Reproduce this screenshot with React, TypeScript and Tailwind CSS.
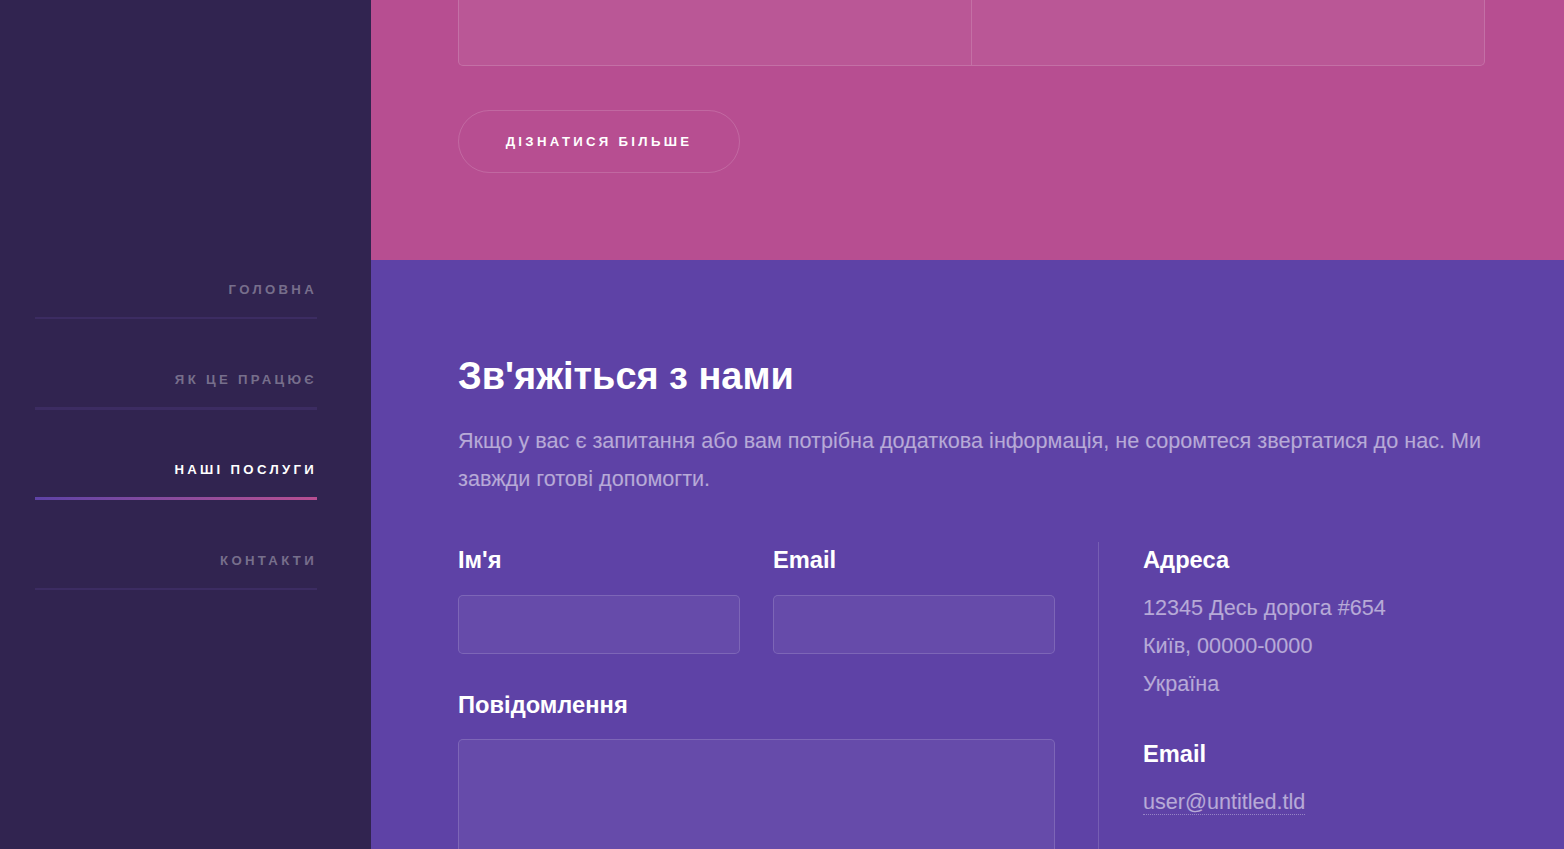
import React from "react";

const navItems = [
  { label: "Головна", active: false },
  { label: "Як це працює", active: false },
  { label: "Наші послуги", active: true },
  { label: "Контакти", active: false },
];

export default function App() {
  return (
    <div
      className="flex h-[849px] w-full overflow-hidden"
      style={{ fontFamily: '"Liberation Sans", Arial, Helvetica, sans-serif' }}
    >
      {/* Sidebar */}
      <aside className="w-[371px] shrink-0 bg-[#312450] pt-[229px] pl-[35px]">
        <nav className="w-[282px]">
          {navItems.map((item) => (
            <a
              key={item.label}
              href="#"
              className="block pt-[50.7px] text-right"
            >
              <span
                className={`block pb-[17px] text-[13.2px] font-bold uppercase leading-[20px] tracking-[0.25em] ${
                  item.active ? "text-white" : "text-white/35"
                }`}
              >
                {item.label}
              </span>
              <span
                className={`block h-[2.6px] w-full ${
                  item.active
                    ? "bg-gradient-to-r from-[#5e42a6] to-[#b74e91]"
                    : "bg-[#3c2c62]"
                }`}
              />
            </a>
          ))}
        </nav>
      </aside>

      {/* Main */}
      <main className="flex min-w-0 flex-1 flex-col">
        {/* Pink section */}
        <section className="h-[260px] shrink-0 bg-[#b74e91] pl-[87px] pr-[79px]">
          <div className="flex h-[66px] rounded-b-[5px] border border-t-0 border-white/15 bg-white/5">
            <div className="flex-1" />
            <div className="flex-1 border-l border-white/15" />
          </div>
          <div className="mt-[44px]">
            <a
              href="#"
              className="inline-flex h-[63px] w-[282px] items-center justify-center rounded-full border border-white/15 text-[13.2px] font-bold uppercase tracking-[0.25em] text-white"
            >
              Дізнатися більше
            </a>
          </div>
        </section>

        {/* Purple section */}
        <section className="flex-1 bg-[#5e42a6] pl-[87px] pr-[79px] pt-[88px] text-[21.6px] leading-[38px] text-white/55">
          <h2 className="mb-[18px] text-[37.9px] font-bold leading-[56px] text-white">
            Зв'яжіться з нами
          </h2>
          <p className="mb-[44px]">
            Якщо у вас є запитання або вам потрібна додаткова інформація, не
            соромтеся звертатися до нас. Ми завжди готові допомогти.
          </p>

          <div className="flex">
            <form className="w-[597px] shrink-0">
              <div className="flex gap-[33px]">
                <div className="w-[282px]">
                  <label className="mb-[17px] block text-[23.7px] font-bold leading-[36px] text-white">
                    Ім'я
                  </label>
                  <input
                    type="text"
                    className="block h-[59px] w-full rounded-[5px] border border-white/15 bg-white/5 outline-none"
                  />
                </div>
                <div className="w-[282px]">
                  <label className="mb-[17px] block text-[23.7px] font-bold leading-[36px] text-white">
                    Email
                  </label>
                  <input
                    type="email"
                    className="block h-[59px] w-full rounded-[5px] border border-white/15 bg-white/5 outline-none"
                  />
                </div>
              </div>
              <div className="mt-[33px]">
                <label className="mb-[16px] block text-[23.7px] font-bold leading-[36px] text-white">
                  Повідомлення
                </label>
                <textarea className="block h-[200px] w-full resize-none rounded-[5px] border border-white/15 bg-white/5 outline-none" />
              </div>
            </form>

            <div className="ml-[43px] flex-1 border-l border-white/15 pl-[44px]">
              <h3 className="mb-[11px] text-[23.7px] font-bold leading-[36px] text-white">
                Адреса
              </h3>
              <p className="mb-[33px]">
                12345 Десь дорога #654
                <br />
                Київ, 00000-0000
                <br />
                Україна
              </p>
              <h3 className="mb-[11px] text-[23.7px] font-bold leading-[36px] text-white">
                Email
              </h3>
              <a
                href="#"
                className="border-b border-dotted border-white/35 text-white/55"
              >
                user@untitled.tld
              </a>
            </div>
          </div>
        </section>
      </main>
    </div>
  );
}
